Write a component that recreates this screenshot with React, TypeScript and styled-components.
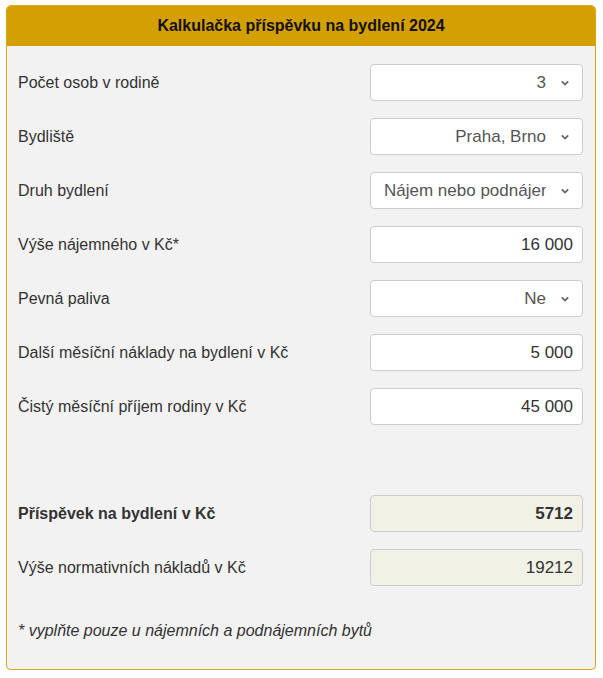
import { createGlobalStyle, styled } from "styled-components";

const GlobalStyle = createGlobalStyle`
  body {
    margin: 0;
    background: #ffffff;
    font-family: "Liberation Sans", Arial, sans-serif;
  }
`;

const Card = styled.div`
  margin: 5px 0 0 6px;
  width: 590px;
  box-sizing: border-box;
  border: 1px solid #d9a917;
  border-radius: 5px;
  background: #f2f2f2;
  overflow: hidden;
  box-shadow: 0 1px 2px rgba(0, 0, 0, 0.12);
`;

const Header = styled.div`
  height: 40px;
  background: #d49f00;
  display: flex;
  align-items: center;
  justify-content: center;
  font-weight: bold;
  font-size: 16px;
  color: #111;
`;

const Body = styled.div`
  padding: 18px 12px 0 11px;
  display: flex;
  flex-direction: column;
`;

const Rows = styled.div`
  display: flex;
  flex-direction: column;
  gap: 17px;
`;

const Row = styled.div`
  display: flex;
  align-items: center;
  justify-content: space-between;
  height: 37px;
`;

const Label = styled.label<{ $bold?: boolean }>`
  font-size: 16px;
  color: #333;
  font-weight: ${(p) => (p.$bold ? "bold" : "normal")};
`;

const Field = styled.div<{ $readonly?: boolean; $bold?: boolean }>`
  width: 213px;
  height: 37px;
  box-sizing: border-box;
  border: 1px solid #ccc;
  border-radius: 4px;
  background: ${(p) => (p.$readonly ? "#f1f1e5" : "#fff")};
  display: flex;
  align-items: center;
  justify-content: flex-end;
  padding: 0 9px 0 12px;
  font-size: 17px;
  color: #333;
  font-weight: ${(p) => (p.$bold ? "bold" : "normal")};
`;

const SelectBox = styled.div`
  width: 213px;
  height: 37px;
  box-sizing: border-box;
  border: 1px solid #ccc;
  border-radius: 4px;
  background: #fff;
  display: flex;
  align-items: center;
  padding: 0 12px 0 13px;
  font-size: 17px;
  color: #555;
`;

const SelectValue = styled.span<{ $clip?: boolean }>`
  flex: 1;
  overflow: hidden;
  white-space: nowrap;
  text-align: ${(p) => (p.$clip ? "left" : "right")};
`;

const Chevron = styled.svg`
  width: 10px;
  height: 10px;
  margin-left: 14px;
  flex-shrink: 0;
`;

const Results = styled.div`
  margin-top: 70px;
  display: flex;
  flex-direction: column;
  gap: 17px;
`;

const Note = styled.p`
  margin: 36px 0 0 0;
  padding-bottom: 29px;
  font-size: 16px;
  font-style: italic;
  color: #333;
`;

const ChevronIcon = () => (
  <Chevron viewBox="0 0 10 10">
    <path d="M1.8 3.4 L5 6.6 L8.2 3.4" fill="none" stroke="#666" strokeWidth="1.8" />
  </Chevron>
);

const Select = ({ value, clip }: { value: string; clip?: boolean }) => (
  <SelectBox>
    <SelectValue $clip={clip}>{value}</SelectValue>
    <ChevronIcon />
  </SelectBox>
);

export default function App() {
  return (
    <>
      <GlobalStyle />
      <Card>
        <Header>Kalkulačka příspěvku na bydlení 2024</Header>
        <Body>
          <Rows>
            <Row>
              <Label>Počet osob v rodině</Label>
              <Select value="3" />
            </Row>
            <Row>
              <Label>Bydliště</Label>
              <Select value="Praha, Brno" />
            </Row>
            <Row>
              <Label>Druh bydlení</Label>
              <Select value="Nájem nebo podnájem" clip />
            </Row>
            <Row>
              <Label>Výše nájemného v Kč*</Label>
              <Field>16 000</Field>
            </Row>
            <Row>
              <Label>Pevná paliva</Label>
              <Select value="Ne" />
            </Row>
            <Row>
              <Label>Další měsíční náklady na bydlení v Kč</Label>
              <Field>5 000</Field>
            </Row>
            <Row>
              <Label>Čistý měsíční příjem rodiny v Kč</Label>
              <Field>45 000</Field>
            </Row>
          </Rows>
          <Results>
            <Row>
              <Label $bold>Příspěvek na bydlení v Kč</Label>
              <Field $readonly $bold>5712</Field>
            </Row>
            <Row>
              <Label>Výše normativních nákladů v Kč</Label>
              <Field $readonly>19212</Field>
            </Row>
          </Results>
          <Note>* vyplňte pouze u nájemních a podnájemních bytů</Note>
        </Body>
      </Card>
    </>
  );
}
